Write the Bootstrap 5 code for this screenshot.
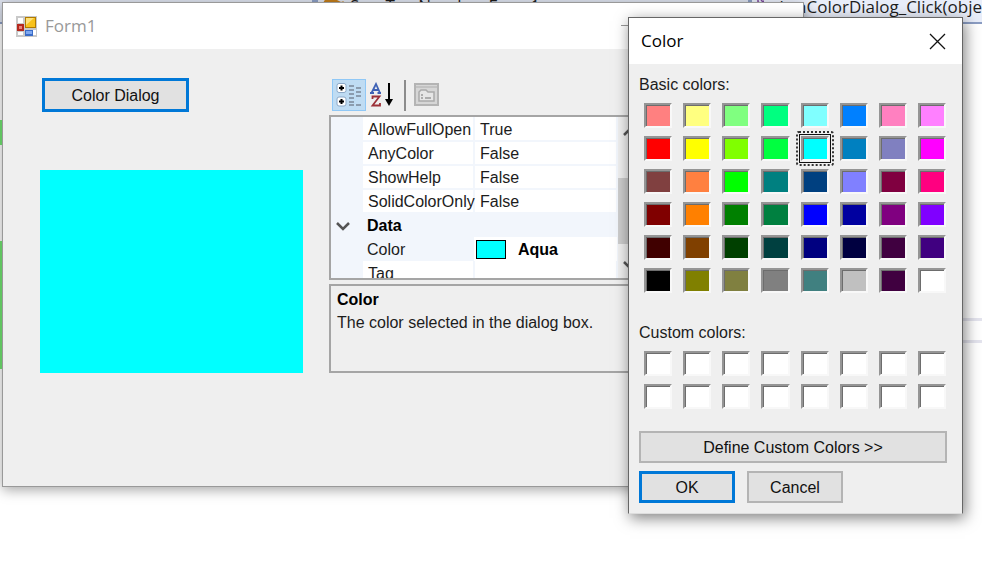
<!DOCTYPE html>
<html lang="en">
<head>
<meta charset="utf-8">
<meta name="viewport" content="width=device-width, initial-scale=1">
<title>Form1</title>
<link href="https://cdn.jsdelivr.net/npm/bootstrap@5.3.0/dist/css/bootstrap.min.css" rel="stylesheet">
<style>
body{font-family:"Liberation Sans",Arial,sans-serif;font-size:16px;line-height:24px;color:#1c1c1c;background:#fff;min-height:100vh;overflow:hidden}
.ui-title{font-family:"Open Sans","Noto Sans",sans-serif;font-size:17px}
/* editor behind the windows */
.editor-bar{height:24px;background:#dde2ee;border-bottom:2px solid #8b9dc3;grid-template-columns:318px 430px 1fr;font-family:"Open Sans",sans-serif;font-size:17px;line-height:24px;white-space:nowrap;overflow:hidden}
.editor-bar .cell{overflow:hidden}
.editor-bar .cell-edge{border-right:6px solid #8b9dc3}
.editor-bar .type-name{margin-top:-6px}
.editor-bar .member{background:#e9eefa;border-left:4px solid #8b9dc3;padding-left:4px;line-height:14px;color:#1e1e1e}
.change-bar{left:0;width:2px;background:#62c462;z-index:1}
.rule-line{left:960px;right:0;height:3px;background:#e4e4ee}
/* windows */
.form-win{left:2px;right:178px;top:2px;border:1px solid #999;background:#efefef;box-shadow:0 3px 12px rgba(0,0,0,.35)}
.form-head{height:46px;background:#fff;color:#999;padding:0 13px}
.form-body{padding:29px 37px 113px}
.dlg{right:19px;top:17px;width:335px;border:1px solid #666;border-bottom-color:#ddd;background:#efefef;box-shadow:2px 4px 14px rgba(0,0,0,.5);z-index:2}
.dlg-head{height:46px;background:#fff;color:#000;padding:0 15px 0 12px}
.dlg-body{padding:9px 15px 10px 10px}
.win-btn{font:inherit;color:#111;line-height:24px;background:#e1e1e1;border:2px solid #b4b4b4;border-radius:0;padding:3px 8px 1px;height:32px}
.win-btn.default{border:3px solid #0078d7;padding:2px 8px 0}
.win-btn.open-btn{width:147px;height:34px;margin-left:2px}
.preview{background:#0ff;height:203px;margin-top:58px}
.left-col{width:263px}
.property-pane{width:315px;margin-left:26px;padding-top:1px}
.tools{padding-left:3px}
.tool-on{width:34px;height:32px;background:#bfdcf3;border:1px solid #90c8f6}
.tool{background:none;border:0}
.tool-sep{width:2px;height:31px;background:#8c8c8c}
.pg{border:2px solid #a5a5a5;background:#f2f6fc;height:165px;overflow:hidden;margin-top:4px}
.pg table{border-collapse:collapse;line-height:22px;table-layout:fixed}
.pg td,.pg th{padding:2px 0 0 5px;border:0;font-weight:400;white-space:nowrap;height:24px}
.pg .plain th,.pg .plain td{background:#fff;border-bottom:2px solid #f2f6fc;border-right:2px solid #f2f6fc;line-height:20px}
.pg .picked td{background:#fff;padding:0 0 0 2px}
.pg .c-gut{width:31px}.pg .c-name{width:112px}
.pg .heading td,.pg .heading th{padding-top:0}
.pg .heading th{font-weight:700;color:#000}
.chip{display:inline-block;width:30px;height:19px;background:#0ff;border:1px solid #000;margin-right:12px}
.scroll-track{width:24px;background:#f0f0f0;padding:10px 0 8px}
.scroll-thumb{height:66px;background:#cdcdcd}
.desc{border:2px solid #a5a5a5;height:89px;margin-top:4px;padding:2px 6px;line-height:23px}
.dlg-body legend{font-size:16px;line-height:24px;float:none;margin-bottom:6px}
.swatches{display:grid;grid-template-columns:repeat(8,1fr);gap:8px 11px;padding:0 1px 0 5px}
.swatch{appearance:none;margin:0;height:25px;background:var(--c,#fff);border:2px solid;border-color:#959595 #f8f8f8 #f8f8f8 #959595;box-shadow:inset 1px 1px 0 #6d6d6d}
.swatch:checked{outline:1px solid #111;outline-offset:1px;position:relative}
.swatch:checked::after{content:"";position:absolute;inset:-7px;border:2px dotted #333;border-radius:3px}
.define{margin-top:22px}
.actions{gap:12px}
.actions .win-btn{width:96px}
</style>
<script src="https://cdn.jsdelivr.net/npm/bootstrap@5.3.0/dist/js/bootstrap.bundle.min.js"></script>
</head>
<body class="position-relative">
<div class="editor-bar d-grid">
  <div class="cell cell-edge"></div>
  <div class="cell type-name d-flex"><svg width="32" height="24" aria-hidden="true"><path d="M5 9 8 4l9 1 6 3 3-1-6 8-10 2z" fill="#c27d1a"/></svg>SumTwoNumber.Form1</div>
  <div class="cell member d-flex"><svg class="me-3" width="14" height="8" aria-hidden="true"><path d="M2 0v2l5 3 5-3V0M5 0l2 2 2-2" fill="none" stroke="#7d4a9c" stroke-width="1.500"/></svg>btnColorDialog_Click(obje</div>
</div>
<div class="change-bar position-absolute" style="top:120px;height:25px"></div>
<div class="change-bar position-absolute" style="top:241px;height:128px"></div>
<div class="rule-line position-absolute" style="top:318px"></div>
<div class="rule-line position-absolute" style="top:340px"></div>

<main class="form-win position-absolute">
  <header class="form-head d-flex align-items-center ui-title">
    <svg class="me-2" width="21" height="21" viewBox="0 0 21 21" aria-hidden="true"><path fill="#c9c9c9" d="M0 0h21v21H0z"/><path fill="#fff" d="M2 2h5v5H2zM2 16h5v3H2zM17 14h3v5h-3z"/><path fill="#b5271c" d="M1 8h7v7H1z"/><path fill="#e8837a" d="M3 10h3v3H3z"/><path fill="#b17b00" d="M9 1h11v11H9z"/><path fill="#f8c21c" d="M10 2h9v9h-9z"/><path fill="#ffe27a" d="M10 2h8l-8 7z"/><path fill="#3a6cc8" d="M9 14h8v6H9z"/><path fill="#7fa8f0" d="M10 15h6v3h-6z"/></svg>
    <span>Form1</span>
    <svg class="ms-auto" width="182" height="10" aria-hidden="true"><path d="M13 4.500h12" stroke="#999"/></svg>
  </header>
  <div class="form-body d-flex">
    <div class="left-col flex-shrink-0">
      <button class="win-btn default open-btn d-block" type="button">Color Dialog</button>
      <div class="preview"></div>
    </div>
    <section class="property-pane">
      <div class="tools d-flex align-items-center" role="toolbar" aria-label="Property view">
        <button class="tool-on p-0 d-flex align-items-center justify-content-center" type="button" aria-label="Categorized">
          <svg width="26" height="26" viewBox="0 0 26 26"><g fill="#fff" stroke="#8da9c8"><rect x="1" y="1.500" width="9" height="9" rx="2"/><rect x="1" y="15" width="9" height="9" rx="2"/></g><path d="M3 6h5M5.500 3.500v5M3 19.500h5M5.500 17v5" stroke="#000" stroke-width="2"/><path d="M13 4h5M13 8h5M20 6h5M13 12h5M20 10h5M20 14h5M13 16h5M13 20h5M13 23h5M20 23h5" stroke="#7b8798" stroke-width="1.500"/></svg>
        </button>
        <button class="tool p-0 ms-1" type="button" aria-label="Alphabetical">
          <svg class="d-block" width="26" height="26" viewBox="0 0 26 26"><g fill="none" stroke-width="1.800"><path d="M1.500 11 6 2l4 9M3 8h6M0 11h4M7.500 11H11" stroke="#3f62b5"/><path d="M2.500 17v-2.500h7L2.500 23.500H10V21" stroke="#9c3038"/></g><path d="M19 1v18" stroke="#000" stroke-width="2"/><path d="M15 17h8L19 24z"/></svg>
        </button>
        <span class="tool-sep ms-2"></span>
        <button class="tool p-0 ms-2" type="button" aria-label="Property pages" disabled>
          <svg class="d-block" width="25" height="24" viewBox="0 0 25 24"><path d="M1 1h23v21H1z" fill="#d6d6d6" stroke="#b4b4b4" stroke-width="2"/><path d="M2 4h21" stroke="#bbb" stroke-width="1.500"/><path d="M5 18V9l2-2h5l2 2h6v9z" fill="#e6e6e6" stroke="#aaa" stroke-width="1.500"/><path d="M7 12h2M7 15h2M11 15h6" stroke="#999" stroke-width="1.500"/></svg>
        </button>
      </div>
      <div class="pg d-flex">
        <table class="w-100">
          <colgroup><col class="c-gut"><col class="c-name"><col></colgroup>
          <tbody>
          <tr class="plain"><td class="bg-transparent"></td><th scope="row">AllowFullOpen</th><td>True</td></tr>
          <tr class="plain"><td class="bg-transparent"></td><th scope="row">AnyColor</th><td>False</td></tr>
          <tr class="plain"><td class="bg-transparent"></td><th scope="row">ShowHelp</th><td>False</td></tr>
          <tr class="plain"><td class="bg-transparent"></td><th scope="row">SolidColorOnly</th><td>False</td></tr>
          <tr class="heading"><td><svg width="14" height="9" viewBox="0 0 14 9" aria-hidden="true"><path d="m1 1 6 6 6-6" fill="none" stroke="#555" stroke-width="2.500"/></svg></td><th scope="rowgroup" colspan="2">Data</th></tr>
          <tr class="picked"><td class="bg-transparent"></td><th scope="row">Color</th><td><span class="chip align-middle"></span><b class="text-black align-middle">Aqua</b></td></tr>
          <tr class="plain"><td class="bg-transparent"></td><th scope="row">Tag</th><td></td></tr>
          </tbody>
        </table>
        <div class="scroll-track flex-shrink-0 d-flex flex-column justify-content-between align-items-center" aria-hidden="true">
          <svg width="14" height="9" viewBox="0 0 14 9"><path d="m1 8 6-6 6 6" fill="none" stroke="#555" stroke-width="2.500"/></svg>
          <div class="scroll-thumb w-100 mt-4"></div>
          <svg width="14" height="9" viewBox="0 0 14 9"><path d="m1 1 6 6 6-6" fill="none" stroke="#555" stroke-width="2.500"/></svg>
        </div>
      </div>
      <div class="desc"><b class="d-block text-black">Color</b>The color selected in the dialog box.</div>
    </section>
  </div>
</main>

<section class="dlg position-absolute" role="dialog" aria-labelledby="dlg-title">
  <header class="dlg-head d-flex align-items-center justify-content-between ui-title">
    <span id="dlg-title">Color</span>
    <button class="tool p-0 d-flex" type="button" aria-label="Close"><svg width="19" height="17" viewBox="0 0 19 17"><path d="m2 1 15 15M17 1 2 16" stroke="#111" stroke-width="1.300"/></svg></button>
  </header>
  <div class="dlg-body">
    <fieldset class="mb-4 pb-1">
      <legend>Basic colors:</legend>
      <div class="swatches" id="basic"></div>
    </fieldset>
    <fieldset>
      <legend>Custom colors:</legend>
      <div class="swatches" id="custom"></div>
    </fieldset>
    <button class="win-btn w-100 d-block define" type="button">Define Custom Colors &gt;&gt;</button>
    <div class="d-flex mt-2 actions">
      <button class="win-btn default" type="button">OK</button>
      <button class="win-btn" type="button">Cancel</button>
    </div>
  </div>
</section>
<script>
const basic = ("ff8080 ffff80 80ff80 00ff80 80ffff 0080ff ff80c0 ff80ff " +
  "ff0000 ffff00 80ff00 00ff40 00ffff 0080c0 8080c0 ff00ff " +
  "804040 ff8040 00ff00 008080 004080 8080ff 800040 ff0080 " +
  "800000 ff8000 008000 008040 0000ff 0000a0 800080 8000ff " +
  "400000 804000 004000 004040 000080 000040 400040 400080 " +
  "000000 808000 808040 808080 408080 c0c0c0 400040 ffffff").split(" ");
function fill(id, colors, picked) {
  const box = document.getElementById(id);
  colors.forEach((c, i) => {
    const s = document.createElement("input");
    s.type = "radio"; s.name = "swatch"; s.className = "swatch";
    s.setAttribute("aria-label", id + " color #" + c);
    s.style.setProperty("--c", "#" + c);
    s.checked = i === picked;
    box.append(s);
  });
}
fill("basic", basic, 12);
fill("custom", Array(16).fill("ffffff"), -1);
</script>
</body>
</html>
